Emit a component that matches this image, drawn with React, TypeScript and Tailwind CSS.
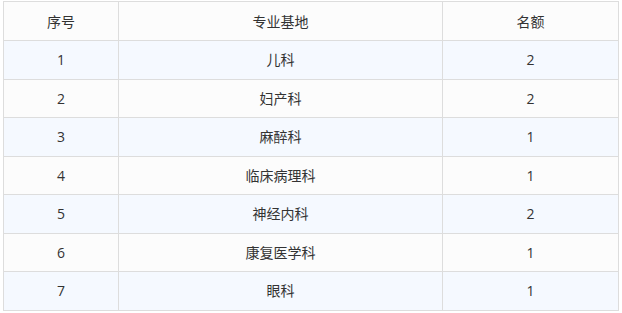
import React from "react";

const rows: [string, string, string][] = [
  ["1", "儿科", "2"],
  ["2", "妇产科", "2"],
  ["3", "麻醉科", "1"],
  ["4", "临床病理科", "1"],
  ["5", "神经内科", "2"],
  ["6", "康复医学科", "1"],
  ["7", "眼科", "1"],
];

export default function App() {
  return (
    <div
      className="w-[622px] h-[313px] bg-white pl-[3px] pt-[1px]"
      style={{ fontFamily: '"Segoe UI", "Open Sans", "Noto Sans CJK SC", sans-serif' }}
    >
      <table className="border-collapse text-[14px] text-[#333333] table-fixed w-[615px]">
        <colgroup>
          <col className="w-[115px]" />
          <col className="w-[324px]" />
          <col className="w-[176px]" />
        </colgroup>
        <thead>
          <tr className="h-[39px] bg-[#fcfcfc]">
            <th className="border border-[#dddddd] font-normal text-center p-0">序号</th>
            <th className="border border-[#dddddd] font-normal text-center p-0">专业基地</th>
            <th className="border border-[#dddddd] font-normal text-center p-0">名额</th>
          </tr>
        </thead>
        <tbody>
          {rows.map((r, i) => (
            <tr
              key={i}
              className={i % 2 === 0 ? "h-[38.5px] bg-[#f5f9ff]" : "h-[38.5px] bg-[#fcfcfc]"}
            >
              <td className="border border-[#dddddd] text-center p-0">{r[0]}</td>
              <td className="border border-[#dddddd] text-center p-0">{r[1]}</td>
              <td className="border border-[#dddddd] text-center p-0">{r[2]}</td>
            </tr>
          ))}
        </tbody>
      </table>
    </div>
  );
}
